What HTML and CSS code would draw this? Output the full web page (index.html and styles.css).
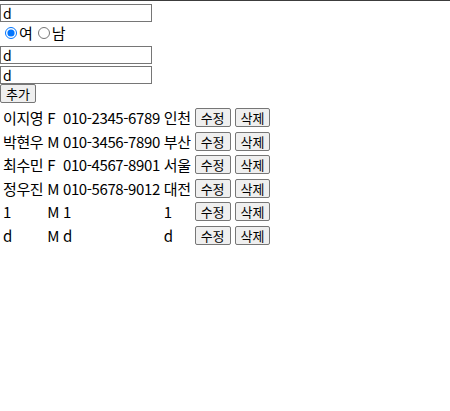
FILE: index.html
```html
<!DOCTYPE html>
<html lang="ko">
<head>
<meta charset="utf-8">
<link rel="stylesheet" href="styles.css">
</head>
<body>
<div class="page">
  <div class="form">
    <input class="field" type="text" value="d">
    <div class="genders">
      <label class="opt"><input class="radio" type="radio" name="g" checked>여</label>
      <label class="opt"><input class="radio" type="radio" name="g">남</label>
    </div>
    <input class="field" type="text" value="d">
    <input class="field last" type="text" value="d">
    <button class="btn">추가</button>
  </div>
  <table class="list">
    <tr><td>이지영</td><td>F</td><td>010-2345-6789</td><td>인천</td><td><button class="btn">수정</button></td><td><button class="btn">삭제</button></td></tr>
    <tr><td>박현우</td><td>M</td><td>010-3456-7890</td><td>부산</td><td><button class="btn">수정</button></td><td><button class="btn">삭제</button></td></tr>
    <tr><td>최수민</td><td>F</td><td>010-4567-8901</td><td>서울</td><td><button class="btn">수정</button></td><td><button class="btn">삭제</button></td></tr>
    <tr><td>정우진</td><td>M</td><td>010-5678-9012</td><td>대전</td><td><button class="btn">수정</button></td><td><button class="btn">삭제</button></td></tr>
    <tr><td>1</td><td>M</td><td>1</td><td>1</td><td><button class="btn">수정</button></td><td><button class="btn">삭제</button></td></tr>
    <tr><td>d</td><td>M</td><td>d</td><td>d</td><td><button class="btn">수정</button></td><td><button class="btn">삭제</button></td></tr>
  </table>
</div>
</body>
</html>
```

FILE: styles.css
```css
html, body {
  margin: 0;
  padding: 0;
  background: #fff;
}
body {
  font-family: "Noto Sans CJK KR", "Noto Sans", sans-serif;
  font-size: 15px;
  color: #000;
}
.page {
  border-top: 1px solid #3c3c3c;
  padding-top: 3px;
}
.form {
  display: flex;
  flex-direction: column;
  align-items: flex-start;
}
.field {
  box-sizing: border-box;
  width: 152px;
  height: 18px;
  margin: 0 0 2px 0;
  padding: 0 2px;
  border: 1px solid #767676;
  font-family: inherit;
  font-size: 14px;
  line-height: 16px;
}
.field.last {
  margin-bottom: 0;
}
.genders {
  display: flex;
  align-items: center;
  height: 21px;
  margin-top: -2px;
  margin-bottom: 3px;
}
.opt {
  display: flex;
  align-items: center;
  line-height: 20px;
}
.radio {
  margin: 0 2px 0 5px;
  width: 12px;
  height: 12px;
}
.btn {
  box-sizing: border-box;
  height: 19px;
  padding: 0 5px;
  border: 1px solid #767676;
  border-radius: 2px;
  background: #efefef;
  font-family: inherit;
  font-size: 13px;
  line-height: 15px;
  color: #000;
}
.list {
  border-spacing: 2px;
  margin-top: 2px;
}
.list td {
  padding: 1px;
  height: 19.5px;
  white-space: nowrap;
  line-height: 19px;
  letter-spacing: -0.4px;
  vertical-align: middle;
}
.list .btn {
  display: block;
}
```
